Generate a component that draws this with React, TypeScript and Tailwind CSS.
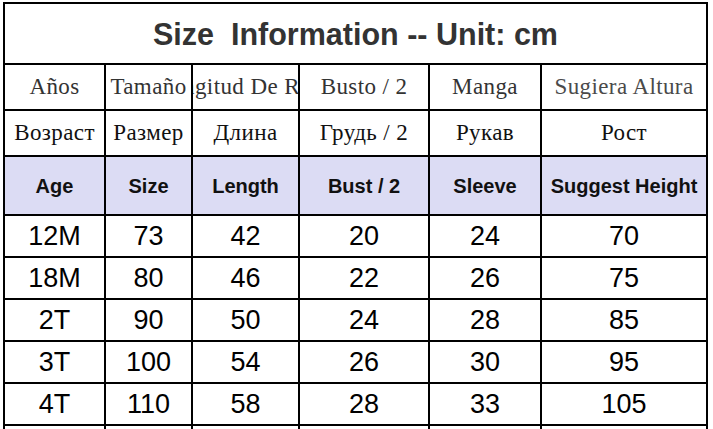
import React from "react";

const cols = "grid-cols-[99px_85px_105px_128px_110px_164px]";

const es = ["Años", "Tamaño", "Longitud De Ropa", "Busto / 2", "Manga", "Sugiera Altura"];
const ru = ["Возраст", "Размер", "Длина", "Грудь / 2", "Рукав", "Рост"];
const en = ["Age", "Size", "Length", "Bust / 2", "Sleeve", "Suggest Height"];
const data = [
  ["12M", "73", "42", "20", "24", "70"],
  ["18M", "80", "46", "22", "26", "75"],
  ["2T", "90", "50", "24", "28", "85"],
  ["3T", "100", "54", "26", "30", "95"],
  ["4T", "110", "58", "28", "33", "105"],
];

export default function App() {
  return (
    <div className="w-[713px] h-[429px] overflow-hidden bg-white">
      <div className={`ml-[3px] mt-[2px] w-[705px] grid ${cols} gap-[2px] p-[2px] bg-black`}>
        <div className="col-span-6 h-[59px] pt-[3px] bg-white flex items-center justify-center text-[30.5px] font-bold text-[#333] whitespace-pre font-['Liberation_Sans',Arial,sans-serif]">
          {"Size  Information -- Unit: cm"}
        </div>
        {es.map((t, i) => (
          <div
            key={"es" + i}
            className={`h-[44px] bg-white flex items-center justify-center overflow-hidden whitespace-nowrap text-[23px] tracking-[0.4px] font-['Liberation_Serif','Times_New_Roman',serif] ${i === 5 ? "text-[#4a4a4a]" : "text-[#333]"}`}
          >
            {t}
          </div>
        ))}
        {ru.map((t, i) => (
          <div
            key={"ru" + i}
            className="h-[44px] bg-white flex items-center justify-center overflow-hidden whitespace-nowrap text-[23px] tracking-[0.4px] text-[#111] font-['Liberation_Serif','Times_New_Roman',serif]"
          >
            {t}
          </div>
        ))}
        {en.map((t, i) => (
          <div
            key={"en" + i}
            className="h-[57px] bg-[#dcdcf4] flex items-center justify-center whitespace-nowrap text-[20px] font-bold text-[#111] font-['Liberation_Sans',Arial,sans-serif]"
          >
            {t}
          </div>
        ))}
        {data.map((r, ri) =>
          r.map((t, i) => (
            <div
              key={"d" + ri + "-" + i}
              className="h-[40px] bg-white flex items-center justify-center text-[27px] text-black font-['Liberation_Sans',Arial,sans-serif]"
            >
              {t}
            </div>
          ))
        )}
        {[0, 1, 2, 3, 4, 5].map((i) => (
          <div key={"x" + i} className="h-[40px] bg-white" />
        ))}
      </div>
    </div>
  );
}
